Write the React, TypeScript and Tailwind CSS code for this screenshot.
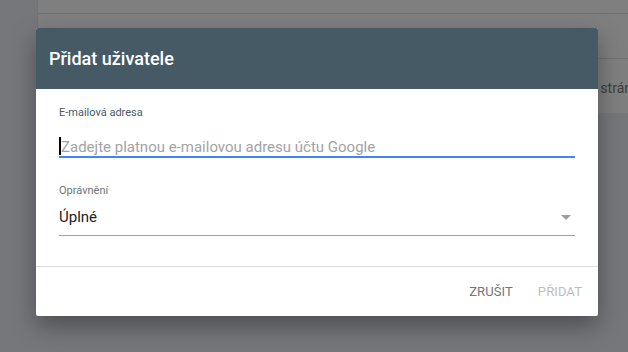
export default function App() {
  return (
    <div
      className="relative h-[352px] w-[628px] overflow-hidden bg-[#76777b]"
      style={{ fontFamily: "Roboto, 'Noto Sans', sans-serif" }}
    >
      {/* dimmed page behind the dialog */}
      <div className="ml-[37px] flex h-[113px] flex-col border-l border-[#737373] bg-[#7f7f7f]">
        <div className="h-[14px] border-b border-[#717171]" />
        <div className="h-[45px] border-b border-[#737373]" />
        <div className="flex flex-1 items-center justify-end overflow-hidden pt-[4px] text-[14px] text-[#3d3d3d]">
          <span className="-mr-[4px] whitespace-nowrap">Zobrazit na strán</span>
        </div>
      </div>

      {/* dialog */}
      <div className="absolute left-[36px] top-[28px] flex h-[288px] w-[562px] flex-col overflow-hidden rounded-[2px] bg-white shadow-[0_10px_24px_rgba(0,0,0,0.35)]">
        <div className="flex h-[61px] shrink-0 items-center bg-[#455a64] pl-[13px]">
          <h2 className="text-[18px] font-medium text-white">Přidat uživatele</h2>
        </div>

        <div className="flex flex-col px-[23px] pt-[17px]">
          <label className="h-[13px] text-[11px] leading-[13px] text-[#455a64]">E-mailová adresa</label>
          <div className="mt-[17px] flex h-[22px] items-start border-b-2 border-[#4285f4]">
            <span className="mt-[1px] h-[18px] w-[2px] bg-black" />
            <span className="mt-[1px] text-[15px] leading-[20px] text-[#a3a3a3]">
              Zadejte platnou e-mailovou adresu účtu Google
            </span>
          </div>

          <label className="mt-[26px] h-[13px] text-[11px] leading-[13px] text-[#6b747a]">Oprávnění</label>
          <div className="mt-[10px] flex h-[29px] items-start justify-between border-b border-[#9e9e9e]">
            <span className="text-[15px] leading-[20px] text-[#212121]">Úplné</span>
            <svg width="10" height="5" viewBox="0 0 10 5" className="mr-[4px] mt-[8px]">
              <path d="M0 0h10L5 5z" fill="#9e9e9e" />
            </svg>
          </div>
        </div>

        <div className="mt-[30px] border-t border-[#e0e0e0]" />
        <div className="flex flex-1 items-center justify-end gap-[25px] pr-[16px]">
          <button className="text-[13px] font-normal uppercase tracking-[0.1px] text-[#757575]">Zrušit</button>
          <button className="text-[13px] font-normal uppercase tracking-[0.1px] text-[#bdbdbd]">Přidat</button>
        </div>
      </div>
    </div>
  );
}
